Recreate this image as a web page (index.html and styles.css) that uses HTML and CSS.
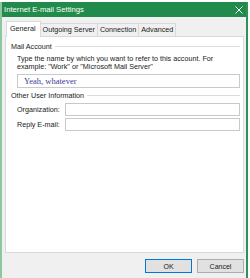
FILE: index.html
```html
<!DOCTYPE html>
<html lang="en">

<head>
  <meta charset="UTF-8">
  <title>Internet E-mail Settings</title>
  <link rel="stylesheet" href="styles.css">
</head>

<body>
  <div class="window">
    <div class="titlebar">
      <span class="title">Internet E-mail Settings</span>
      <svg class="close" width="8" height="8" viewBox="0 0 8 8" aria-label="Close">
        <path d="M0.5 0.5 L7.5 7.5 M7.5 0.5 L0.5 7.5" stroke="#ffffff" stroke-width="1" fill="none" />
      </svg>
    </div>

    <div class="dialog">
      <!-- Tabs -->
      <div class="tabs">
        <div class="tab active">General</div>
        <div class="tab">Outgoing Server</div>
        <div class="tab">Connection</div>
        <div class="tab">Advanced</div>
      </div>

      <div class="panel">
        <div class="group-title">Mail Account</div>
        <div class="group-body">
          <p class="hint">Type the name by which you want to refer to this account. For<br>example: "Work" or "Microsoft Mail Server"</p>
          <div class="input account-name">Yeah, whatever</div>
        </div>

        <div class="group-title">Other User Information</div>
        <div class="group-body">
          <div class="row">
            <label>Organization:</label>
            <div class="input"></div>
          </div>
          <div class="row">
            <label>Reply E-mail:</label>
            <div class="input"></div>
          </div>
        </div>
      </div>

      <div class="footer">
        <button class="btn default">OK</button>
        <button class="btn">Cancel</button>
      </div>
    </div>
  </div>
</body>

</html>
```

FILE: styles.css
```css
/* General Styles */
body {
  margin: 0;
  background-color: #ffffff;
  font-family: Tahoma, 'Liberation Sans', Arial, sans-serif;
  font-size: 7.2px;
  color: #1a1a1a;
}

.window {
  margin-top: 2px;
  width: 244px;
  height: 276px;
  border-left: 2px solid #8cc7a0;
  border-right: 2px solid #2f9156;
  display: flex;
  flex-direction: column;
}

.titlebar {
  height: 15px;
  flex: none;
  background-color: #218b4b;
  color: #ffffff;
  display: flex;
  align-items: center;
  justify-content: space-between;
  padding: 0 3px 0 2px;
  font-size: 7.7px;
}

.dialog {
  flex: 1;
  background-color: #f0f0f0;
  padding: 4px 2px 0 3px;
  display: flex;
  flex-direction: column;
}

/* Tabs */
.tabs {
  display: flex;
  align-items: flex-end;
  padding-left: 2px;
  height: 15px;
  flex: none;
}

.tab {
  height: 13px;
  line-height: 12px;
  padding: 0 2px;
  border: 1px solid #d9d9d9;
  border-bottom: none;
  margin-left: -1px;
  background-color: #f0f0f0;
  box-sizing: border-box;
  white-space: nowrap;
}

.tab.active {
  height: 16px;
  line-height: 14px;
  padding: 0 4px 0 3px;
  margin-bottom: -1px;
  background-color: #ffffff;
  position: relative;
  z-index: 1;
}

.panel {
  height: 217px;
  width: 239px;
  flex: none;
  box-sizing: border-box;
  background-color: #ffffff;
  border: 1px solid #d9d9d9;
  padding: 3px 3px 0 5px;
}

.group-title {
  display: flex;
  align-items: center;
  gap: 3px;
  height: 12px;
  white-space: nowrap;
}

.group-title::after {
  content: "";
  flex: 1;
  border-top: 1px solid #dcdcdc;
}

.group-body {
  padding-left: 6px;
}

.hint {
  margin: 3px 0 3px 0;
  line-height: 8px;
  white-space: nowrap;
}

.input {
  height: 13px;
  border: 1px solid #c9c9c9;
  background-color: #ffffff;
  box-sizing: border-box;
  width: 223px;
  flex: none;
}

.account-name {
  height: 14px;
  font-family: 'Liberation Serif', serif;
  font-size: 8.5px;
  color: #3b3b94;
  padding-left: 6px;
  line-height: 12px;
  margin-bottom: 1px;
}

.row {
  display: flex;
  align-items: center;
  margin-bottom: 2px;
}

.row:first-child {
  margin-top: 2px;
}

.row label {
  width: 48px;
  white-space: nowrap;
}

.row .input {
  width: 175px;
}

/* Footer */
.footer {
  display: flex;
  justify-content: flex-end;
  gap: 5px;
  padding: 6px 0 0 0;
}

.btn {
  width: 47px;
  height: 14px;
  padding: 0;
  font-family: inherit;
  font-size: 7px;
  color: #1a1a1a;
  background-color: #e1e1e1;
  border: 1px solid #adadad;
  box-sizing: border-box;
}

.btn.default {
  border: 1px solid #0078d7;
  box-shadow: inset 0 0 0 1px #e1e1e1;
}
```
